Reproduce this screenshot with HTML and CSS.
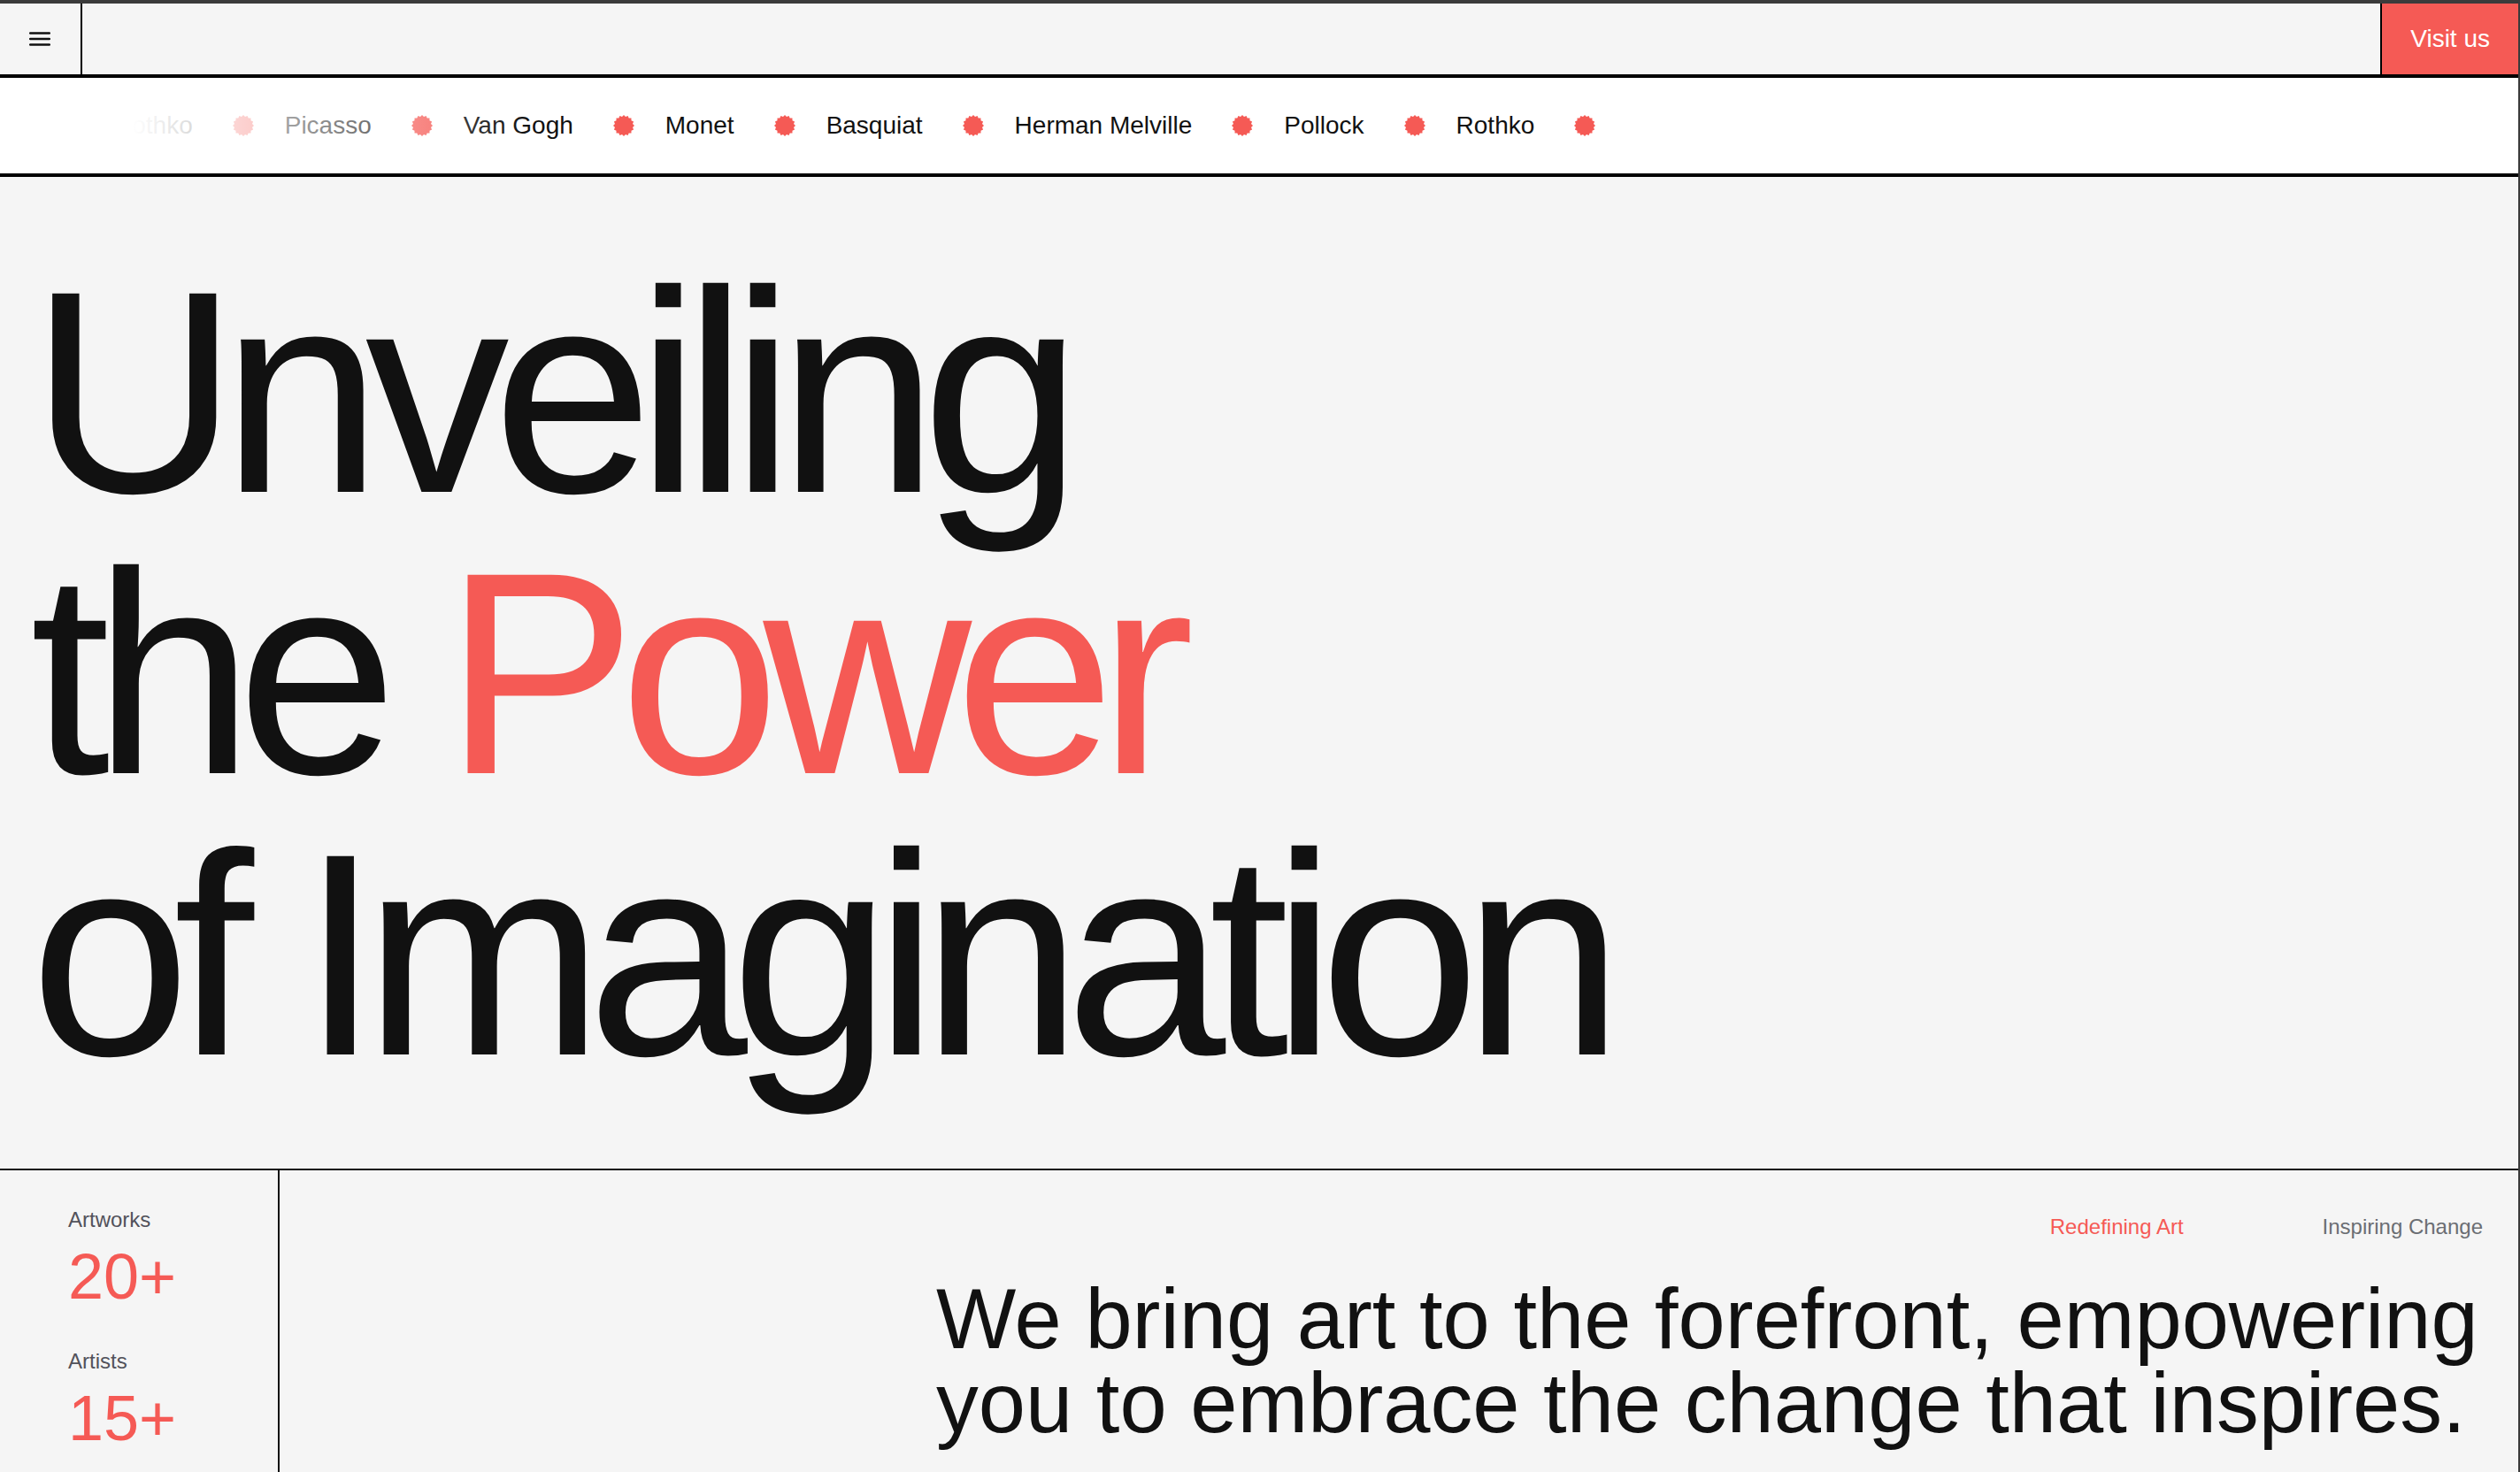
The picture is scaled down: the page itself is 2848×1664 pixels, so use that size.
FILE: index.html
```html
<!DOCTYPE html>
<html lang="en">
<head>
<meta charset="utf-8">
<title>Unveiling the Power of Imagination</title>
<link rel="stylesheet" href="styles.css">
</head>
<body>
<svg class="defs" width="0" height="0" aria-hidden="true">
  <symbol id="burst" viewBox="-12 -12 24 24">
    <polygon points="12,0 10,1.99 11.09,4.59 8.48,5.67 8.49,8.49 5.67,8.48 4.59,11.09 1.99,10 0,12 -1.99,10 -4.59,11.09 -5.67,8.48 -8.49,8.49 -8.48,5.67 -11.09,4.59 -10,1.99 -12,0 -10,-1.99 -11.09,-4.59 -8.48,-5.67 -8.49,-8.49 -5.67,-8.48 -4.59,-11.09 -1.99,-10 0,-12 1.99,-10 4.59,-11.09 5.67,-8.48 8.49,-8.49 8.48,-5.67 11.09,-4.59 10,-1.99"/>
  </symbol>
</svg>
<div class="frame">
  <header class="topbar">
    <button class="menu-btn" aria-label="Menu">
      <svg class="menu-icon" viewBox="0 0 24 16" width="24" height="16">
        <line x1="1.2" y1="1.5" x2="22.8" y2="1.5"/>
        <line x1="1.2" y1="8" x2="22.8" y2="8"/>
        <line x1="1.2" y1="14.5" x2="22.8" y2="14.5"/>
      </svg>
    </button>
    <div class="topbar-spacer"></div>
    <a class="visit-btn" href="#">Visit us</a>
  </header>

  <div class="marquee">
    <div class="marquee-track">
      <span class="marquee-item">Rothko</span><svg class="marquee-dot"><use href="#burst"/></svg>
      <span class="marquee-item">Picasso</span><svg class="marquee-dot"><use href="#burst"/></svg>
      <span class="marquee-item">Van Gogh</span><svg class="marquee-dot"><use href="#burst"/></svg>
      <span class="marquee-item">Monet</span><svg class="marquee-dot"><use href="#burst"/></svg>
      <span class="marquee-item">Basquiat</span><svg class="marquee-dot"><use href="#burst"/></svg>
      <span class="marquee-item">Herman Melville</span><svg class="marquee-dot"><use href="#burst"/></svg>
      <span class="marquee-item">Pollock</span><svg class="marquee-dot"><use href="#burst"/></svg>
      <span class="marquee-item">Rothko</span><svg class="marquee-dot"><use href="#burst"/></svg>
    </div>
  </div>

  <section class="hero">
    <h1 class="hero-title">Unveiling<br>the <span class="accent">Power</span><br>of Imagination</h1>
  </section>

  <section class="info">
    <aside class="stats">
      <div class="stat">
        <div class="stat-label">Artworks</div>
        <div class="stat-value">20+</div>
      </div>
      <div class="stat">
        <div class="stat-label">Artists</div>
        <div class="stat-value">15+</div>
      </div>
    </aside>
    <div class="mission">
      <div class="tags">
        <span class="tag tag-accent">Redefining Art</span>
        <span class="tag">Inspiring Change</span>
      </div>
      <p class="mission-text">We bring art to the forefront, empowering you to embrace the change that inspires.</p>
    </div>
  </section>
</div>
</body>
</html>
```

FILE: styles.css
```css
* { box-sizing: border-box; }

html, body {
  margin: 0;
  padding: 0;
}

body {
  background: #f5f5f5;
  font-family: "Liberation Sans", Arial, Helvetica, sans-serif;
  color: #111;
  overflow: hidden;
}

.defs {
  position: absolute;
  width: 0;
  height: 0;
}

.frame {
  border-top: 4px solid #3b3b3b;
  border-right: 2px solid #3b3b3b;
  min-height: 1664px;
  background: #f5f5f5;
}

/* Top bar */
.topbar {
  display: flex;
  height: 84px;
  border-bottom: 4px solid #000;
  background: #f5f5f5;
}

.menu-btn {
  width: 93px;
  flex: none;
  border: 0;
  border-right: 2px solid #000;
  background: transparent;
  padding: 0 2px 0 0;
  display: flex;
  align-items: center;
  justify-content: center;
}

.menu-icon line {
  stroke: #111;
  stroke-width: 2.6;
  stroke-linecap: round;
}

.topbar-spacer {
  flex: 1;
}

.visit-btn {
  flex: none;
  display: flex;
  align-items: center;
  padding: 0 32px;
  background: #f55a55;
  border-left: 2px solid #000;
  color: #fff;
  font-size: 28px;
  text-decoration: none;
}

/* Marquee */
.marquee {
  position: relative;
  height: 112px;
  background: #fff;
  border-bottom: 4px solid #000;
  overflow: hidden;
  display: flex;
  align-items: center;
}

.marquee::before {
  content: "";
  position: absolute;
  left: 0;
  top: 0;
  bottom: 0;
  width: 620px;
  background: linear-gradient(to right, #fff 0, #fff 150px, rgba(255,255,255,0) 600px);
  z-index: 1;
  pointer-events: none;
}

.marquee-track {
  display: flex;
  align-items: center;
  padding-left: 129px;
  white-space: nowrap;
  font-size: 28px;
  color: #111;
}

.marquee-dot {
  flex: none;
  width: 24px;
  height: 24px;
  margin: 0 35px 0 45px;
  fill: #f55a55;
}

/* Hero */
.hero {
  padding: 84px 0 83px 34px;
  border-bottom: 2px solid #111;
}

.hero-title {
  margin: 0;
  font-size: 326px;
  line-height: 318px;
  font-weight: 400;
  letter-spacing: -19px;
  color: #111;
}

.accent {
  color: #f55a55;
}

/* Info */
.info {
  display: flex;
}

.stats {
  flex: 0 0 316px;
  border-right: 2px solid #111;
  padding: 40px 0 40px 77px;
}

.stat + .stat {
  margin-top: 44px;
}

.stat-label {
  font-size: 24px;
  line-height: 32px;
  color: #52525b;
}

.stat-value {
  margin-top: 12px;
  font-size: 72px;
  line-height: 72px;
  color: #f55a55;
}

.mission {
  flex: 1;
  padding: 48px 40px 0 0;
  display: flex;
  flex-direction: column;
  align-items: flex-end;
}

.tags {
  display: flex;
  gap: 157px;
  font-size: 24px;
  line-height: 32px;
}

.tag {
  color: #6b6e73;
}

.tag-accent {
  color: #f55a55;
}

.mission-text {
  width: 1748px;
  margin: 40px 0 0;
  font-size: 95.7px;
  line-height: 95px;
  color: #111;
}
```
